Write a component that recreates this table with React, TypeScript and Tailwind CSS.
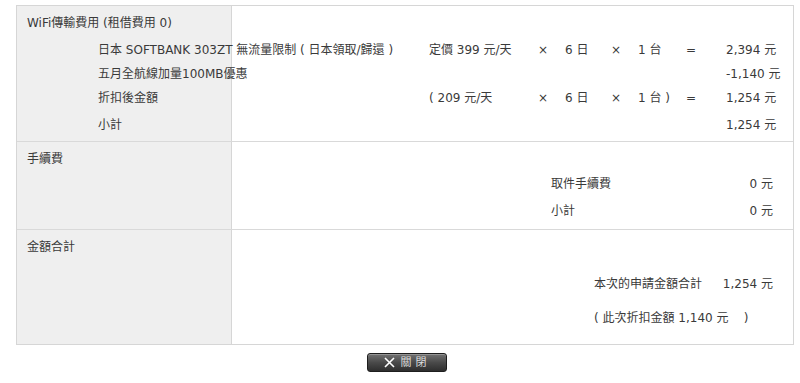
import React from "react";

const font = {
  fontFamily: '"DejaVu Sans", "Noto Sans CJK TC", sans-serif',
};

const bg =
  "bg-[linear-gradient(to_right,#efefef_0px,#efefef_214px,#d6d6d6_214px,#d6d6d6_215px,#ffffff_215px)]";

export default function App() {
  return (
    <div className="w-[800px] h-[383px] bg-white text-[12px] text-[#3a3a3a]" style={font}>
      <div className="pt-[5px] pl-[16px]">
        <div className="w-[778px] border border-[#d6d6d6]">
          {/* Section 1 */}
          <div className={`${bg} pt-[7px] pb-[4px] border-b border-[#d9d9d9]`}>
            <div className="h-[20px] leading-[20px] pl-[10px]">WiFi傳輸費用 (租借費用 0)</div>
            <div className="mt-[5px] pl-[81px]">
              <div className="grid grid-cols-[331px_109px_27px_46px_27px_48px_40px_48px] h-[24px] leading-[24px] whitespace-nowrap">
                <div>日本 SOFTBANK 303ZT 無流量限制 ( 日本領取/歸還 )</div>
                <div>定價 399 元/天</div>
                <div>×</div>
                <div>6 日</div>
                <div>×</div>
                <div>1 台</div>
                <div>=</div>
                <div className="text-right">2,394 元</div>
              </div>
              <div className="grid grid-cols-[628px_48px] h-[24px] leading-[24px] whitespace-nowrap">
                <div>五月全航線加量100MB優惠</div>
                <div className="text-right">-1,140 元</div>
              </div>
              <div className="grid grid-cols-[331px_109px_27px_46px_27px_48px_40px_48px] h-[24px] leading-[24px] whitespace-nowrap">
                <div>折扣後金額</div>
                <div>( 209 元/天</div>
                <div>×</div>
                <div>6 日</div>
                <div>×</div>
                <div>1 台 )</div>
                <div>=</div>
                <div className="text-right">1,254 元</div>
              </div>
              <div className="mt-[3px] grid grid-cols-[628px_48px] h-[24px] leading-[24px] whitespace-nowrap">
                <div>小計</div>
                <div className="text-right">1,254 元</div>
              </div>
            </div>
          </div>

          {/* Section 2 */}
          <div className={`${bg} pt-[7px] pb-[6px] border-b border-[#d9d9d9]`}>
            <div className="h-[20px] leading-[20px] pl-[10px]">手續費</div>
            <div className="flex justify-end pr-[20px]">
              <div>
                <div className="mt-[3px] grid grid-cols-[170px_52px] h-[24px] leading-[24px]">
                  <div>取件手續費</div>
                  <div className="text-right">0 元</div>
                </div>
                <div className="mt-[3px] grid grid-cols-[170px_52px] h-[24px] leading-[24px]">
                  <div>小計</div>
                  <div className="text-right">0 元</div>
                </div>
              </div>
            </div>
          </div>

          {/* Section 3 */}
          <div className={`${bg} pt-[7px] pb-[14px]`}>
            <div className="h-[20px] leading-[20px] pl-[10px]">金額合計</div>
            <div className="flex justify-end pr-[20px]">
              <div className="w-[179px]">
                <div className="mt-[15px] flex justify-between h-[24px] leading-[24px] whitespace-nowrap">
                  <span>本次的申請金額合計</span>
                  <span>1,254 元</span>
                </div>
                <div className="mt-[10px] h-[24px] leading-[24px] whitespace-nowrap">
                  ( 此次折扣金額 1,140 元 &nbsp;&nbsp;&nbsp;)
                </div>
              </div>
            </div>
          </div>
        </div>

        <div className="w-[778px] flex justify-center mt-[8px]">
          <button className="ml-[4px] w-[80px] h-[19px] rounded-[3px] border border-[#1e1e1e] bg-[linear-gradient(to_bottom,#727272,#4a4a4a_50%,#2e2e2e)] flex items-center justify-center gap-[6px] text-[#dcdcdc] text-[11px] leading-none shadow-[inset_0_1px_0_rgba(255,255,255,0.25)]">
            <svg width="11" height="11" viewBox="0 0 11 11">
              <path d="M1 1 L10 10 M10 1 L1 10" stroke="#ffffff" strokeWidth="1.6" />
            </svg>
            <span className="tracking-[4px]">關閉</span>
          </button>
        </div>
      </div>
    </div>
  );
}
